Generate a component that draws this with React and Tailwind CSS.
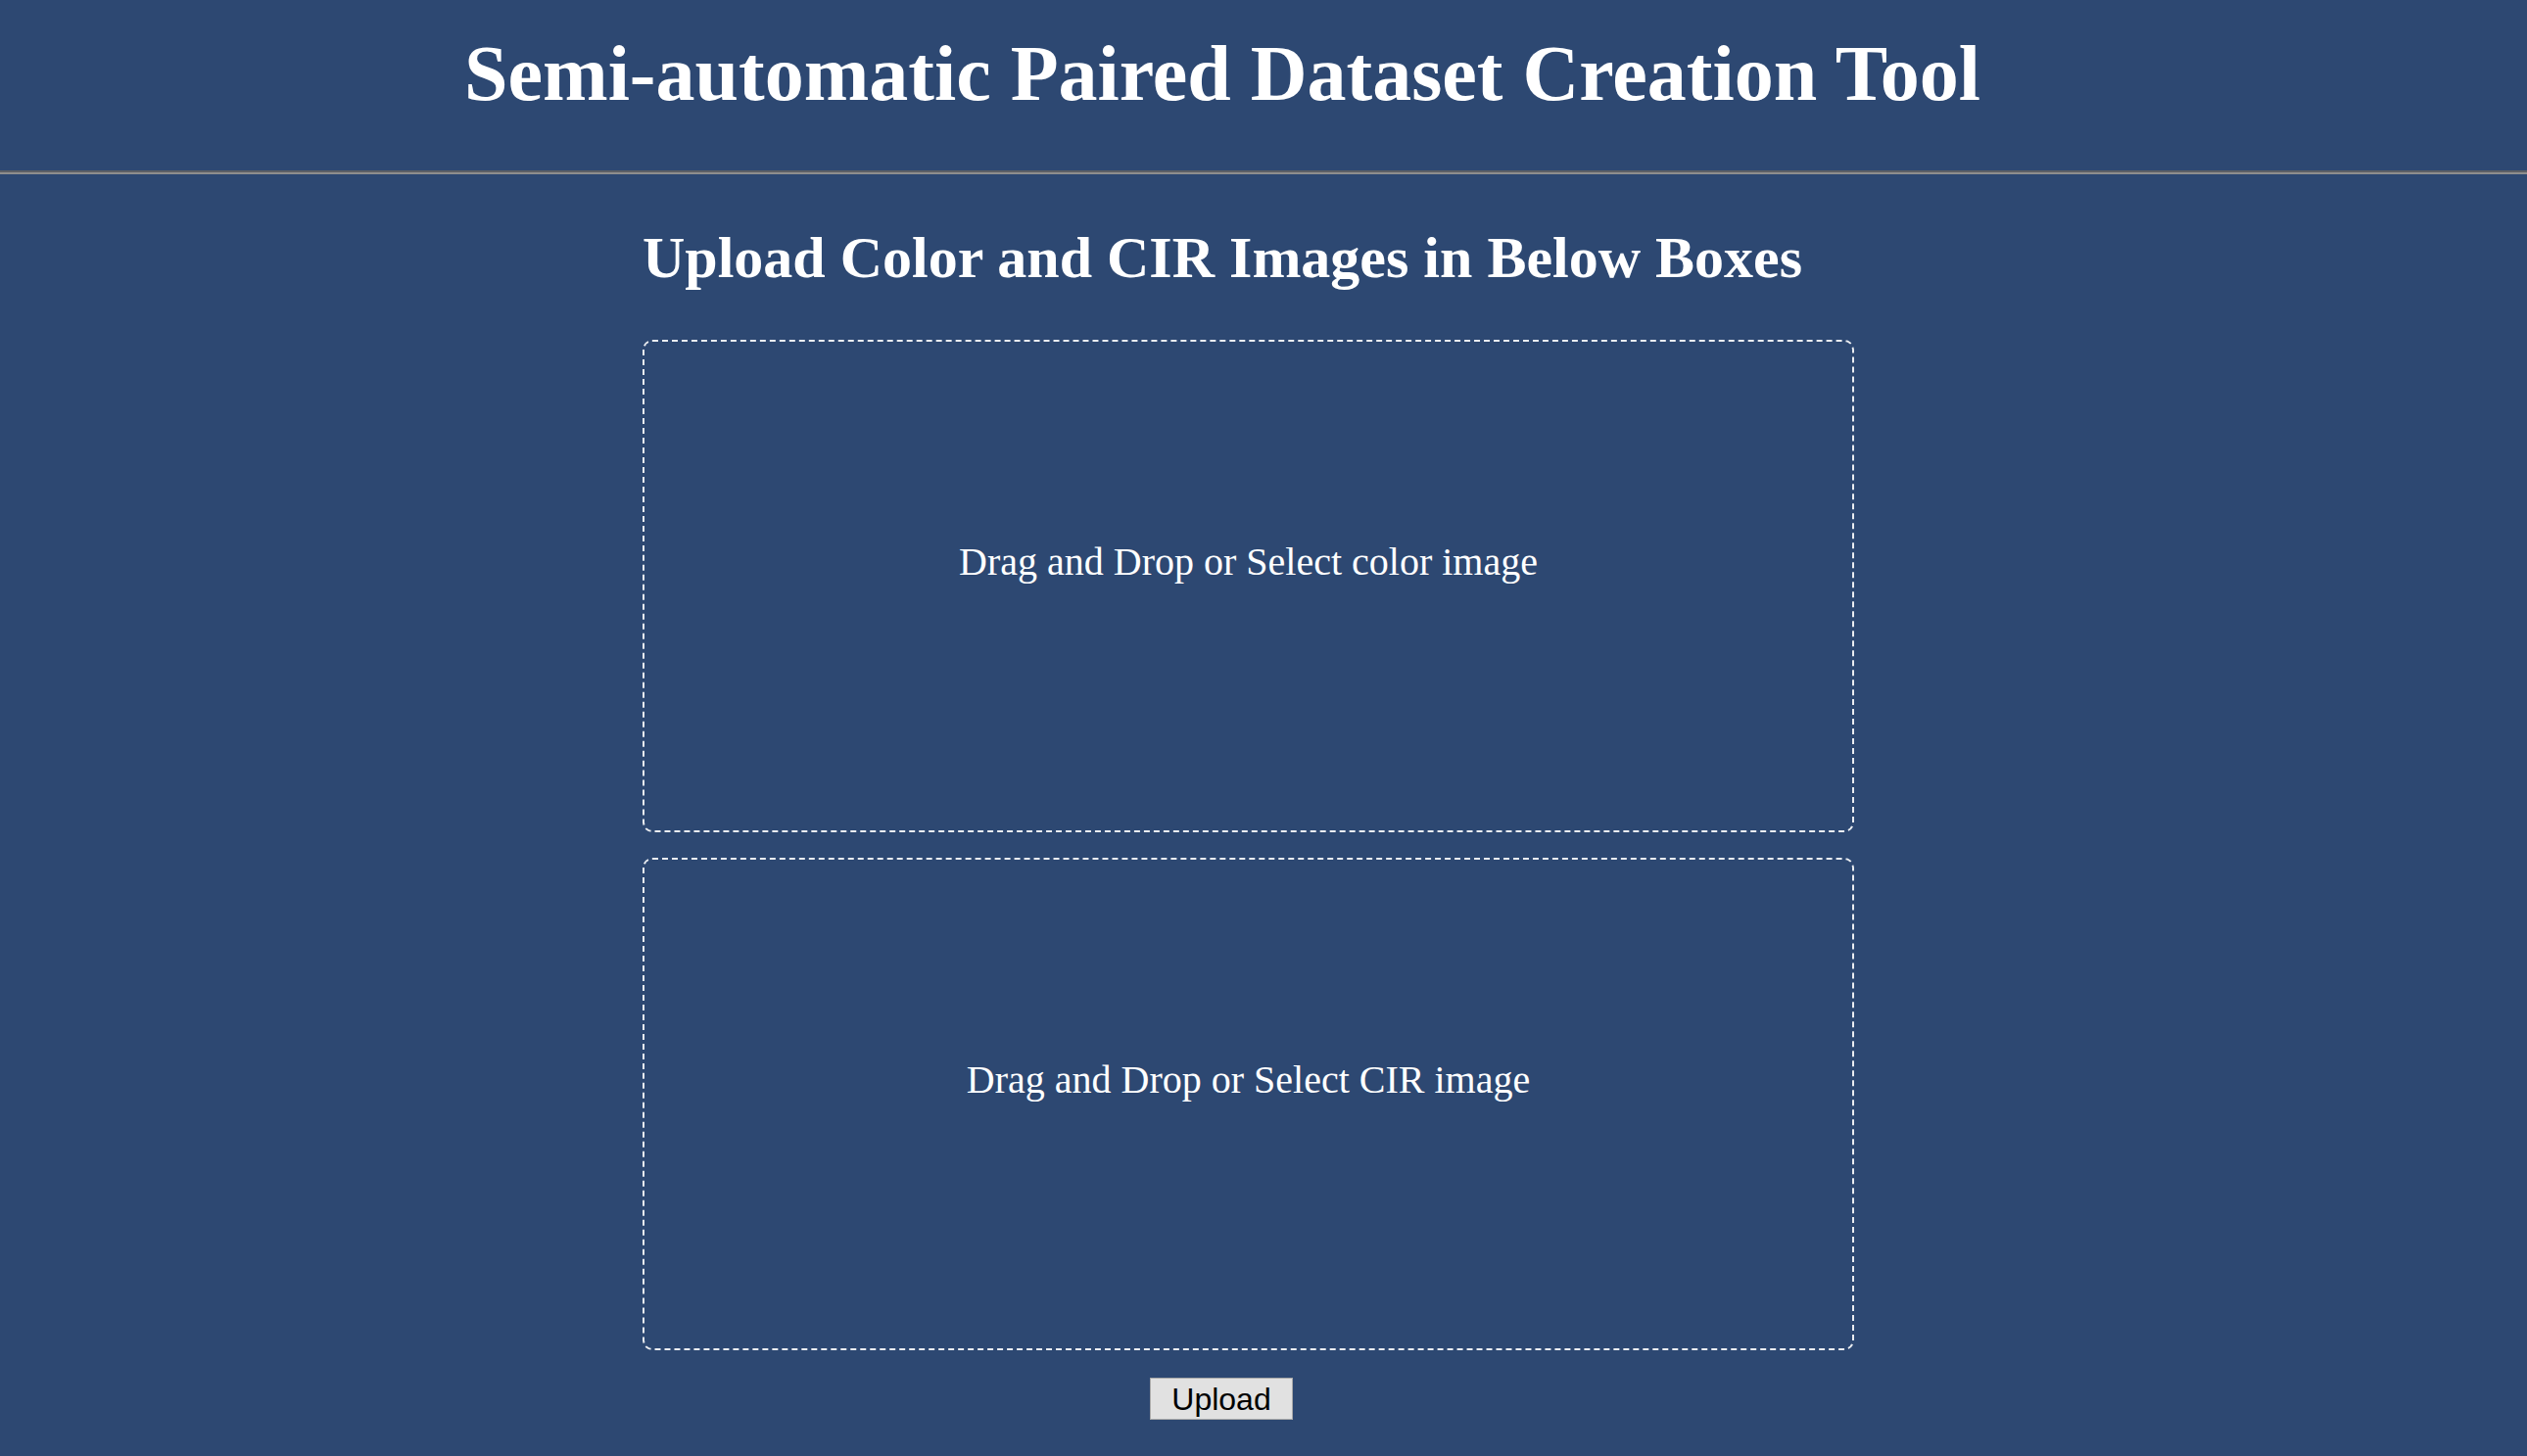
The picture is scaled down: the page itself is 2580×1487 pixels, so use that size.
export default function App() {
  return (
    <div
      className="min-h-screen bg-[#2d4872] text-white"
      style={{ fontFamily: '"Liberation Serif", "Times New Roman", serif' }}
    >
      <header className="pt-[35px]">
        <h1 className="text-center text-[80px] leading-[80px] font-bold pr-[84px]">
          Semi-automatic Paired Dataset Creation Tool
        </h1>
      </header>
      <div className="mt-[59px] border-t-2 border-b-2 border-t-[#5d6066] border-b-[#8e8e8e]" />
      <main className="ml-[656px] w-[1237px]">
        <h2 className="mt-[55px] text-[60px] leading-[60px] font-bold">
          Upload Color and CIR Images in Below Boxes
        </h2>
        <div className="mt-[54px] h-[503px] border-2 border-dashed border-white/90 rounded-[10px] flex items-center justify-center pb-[50px] text-[40px]">
          Drag and Drop or Select color image
        </div>
        <div className="mt-[26px] h-[503px] border-2 border-dashed border-white/90 rounded-[10px] flex items-center justify-center pb-[50px] text-[40px]">
          Drag and Drop or Select CIR image
        </div>
      </main>
      <div className="flex justify-center pr-[86px] mt-[28px] pb-[37px]">
        <button
          className="w-[146px] h-[43px] bg-[#e1e1e1] border border-[#a9a9a9] text-black text-[32px] leading-none flex items-center justify-center"
          style={{ fontFamily: '"Liberation Sans", Arial, sans-serif' }}
        >
          Upload
        </button>
      </div>
    </div>
  );
}
